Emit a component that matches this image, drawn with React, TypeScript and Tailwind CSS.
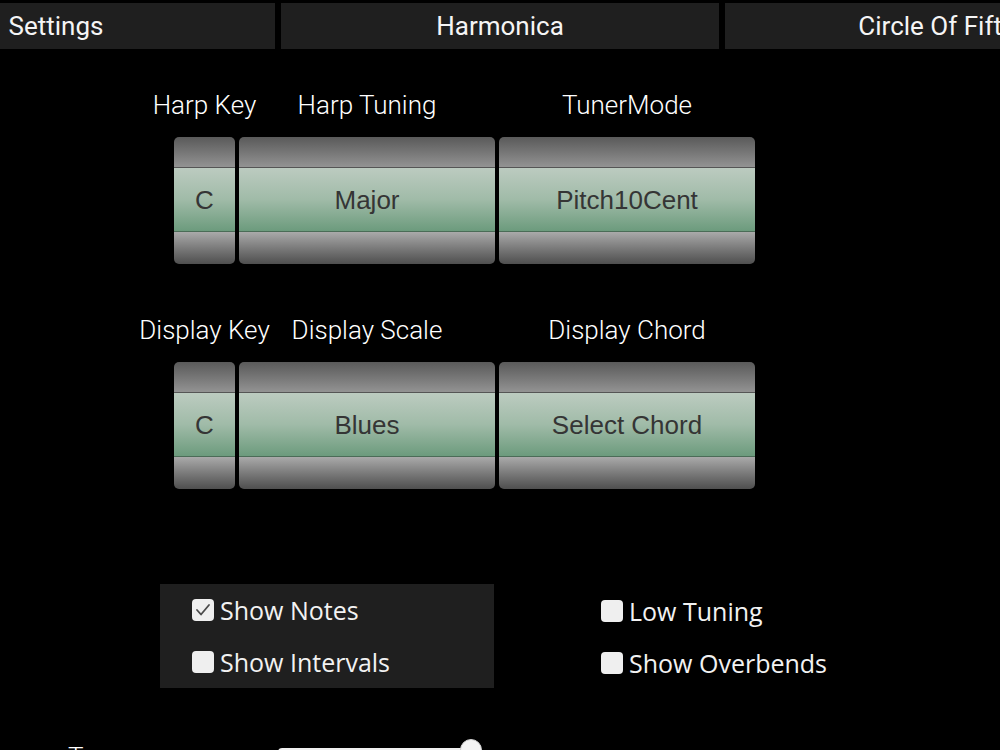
import { useState } from "react";

const TABS = ["Settings", "Harmonica", "Circle Of Fifths"];

function Picker({ value }: { value: string }) {
  return (
    <div className="flex flex-col rounded-[5px] overflow-hidden">
      <div className="h-[31px] bg-linear-to-b from-[#5a5a5a] to-[#939393] border-b border-[#555]" />
      <div className="h-[64px] pt-[2px] bg-linear-to-b from-[#bccbc0] via-[#a0bba8] to-[#6c9b7d] border-b border-[#4b6c57] flex items-center justify-center font-['Liberation_Sans',sans-serif] text-[26px] text-[#353535]">
        {value}
      </div>
      <div className="h-[32px] bg-linear-to-b from-[#aaaaaa] to-[#4f4f4f]" />
    </div>
  );
}

function PickerGroup({ labels, values }: { labels: string[]; values: string[] }) {
  return (
    <div className="ml-[174px] grid grid-cols-[61px_256px_256px] gap-x-[4px] gap-y-[17px] w-max">
      {labels.map((label) => (
        <div key={label} className="h-[30px] leading-[30px] flex justify-center whitespace-nowrap text-[26px] font-light text-white">
          {label}
        </div>
      ))}
      {values.map((v, i) => (
        <Picker key={i} value={v} />
      ))}
    </div>
  );
}

function Checkbox({ label, checked, onToggle }: { label: string; checked: boolean; onToggle: () => void }) {
  return (
    <button onClick={onToggle} className="h-[52px] flex items-center gap-[6px] text-left cursor-pointer">
      <span className="w-[22px] h-[22px] rounded-[4px] bg-[#efefef] flex items-center justify-center shrink-0">
        {checked && (
          <svg width="22" height="22" viewBox="0 0 22 22">
            <polyline points="5,11 9,15.5 17,6" fill="none" stroke="#4a4a4a" strokeWidth="1.8" strokeLinecap="round" strokeLinejoin="round" />
          </svg>
        )}
      </span>
      <span className="font-['Open_Sans',sans-serif] text-[25px] leading-[30px] text-[#f2f2f2]">{label}</span>
    </button>
  );
}

export default function App() {
  const [opts, setOpts] = useState({
    notes: true,
    intervals: false,
    low: false,
    overbends: false,
  });
  const toggle = (k: keyof typeof opts) => setOpts({ ...opts, [k]: !opts[k] });

  return (
    <div className="w-[1000px] h-[750px] overflow-hidden bg-black font-['Roboto',sans-serif]">
      {/* Tab strip, scrolled so the first tab is partly hidden */}
      <div className="flex gap-[6px] pt-[3px] ml-[-163px]">
        {TABS.map((t) => (
          <div key={t} className="w-[438px] h-[46px] shrink-0 bg-[#1f1f1f] flex items-center justify-center text-[26px] leading-[30px] text-[#f5f5f5] whitespace-nowrap">
            {t}
          </div>
        ))}
      </div>

      <div className="mt-[41px]">
        <PickerGroup labels={["Harp Key", "Harp Tuning", "TunerMode"]} values={["C", "Major", "Pitch10Cent"]} />
      </div>

      <div className="mt-[51px]">
        <PickerGroup labels={["Display Key", "Display Scale", "Display Chord"]} values={["C", "Blues", "Select Chord"]} />
      </div>

      <div className="mt-[95px] flex">
        <div className="ml-[160px] w-[334px] h-[104px] bg-[#1f1f1f] pl-[32px] flex flex-col">
          <Checkbox label="Show Notes" checked={opts.notes} onToggle={() => toggle("notes")} />
          <Checkbox label="Show Intervals" checked={opts.intervals} onToggle={() => toggle("intervals")} />
        </div>
        <div className="ml-[107px] pt-[1px] flex flex-col">
          <Checkbox label="Low Tuning" checked={opts.low} onToggle={() => toggle("low")} />
          <Checkbox label="Show Overbends" checked={opts.overbends} onToggle={() => toggle("overbends")} />
        </div>
      </div>

      <div className="mt-[50px] flex items-start">
        <div className="ml-[68px] mt-[3px] w-[210px] text-[26px] leading-[30px] font-light text-white">Transpose</div>
        <div className="relative w-[204px] h-[22px]">
          <div className="mt-[9px] h-[8px] w-[190px] bg-[#f0f0f0] rounded-l-[4px]" />
          <div className="absolute left-[182px] top-0 w-[22px] h-[22px] rounded-full bg-[#f4f4f4] border border-[#cfcfcf]" />
        </div>
      </div>
    </div>
  );
}
